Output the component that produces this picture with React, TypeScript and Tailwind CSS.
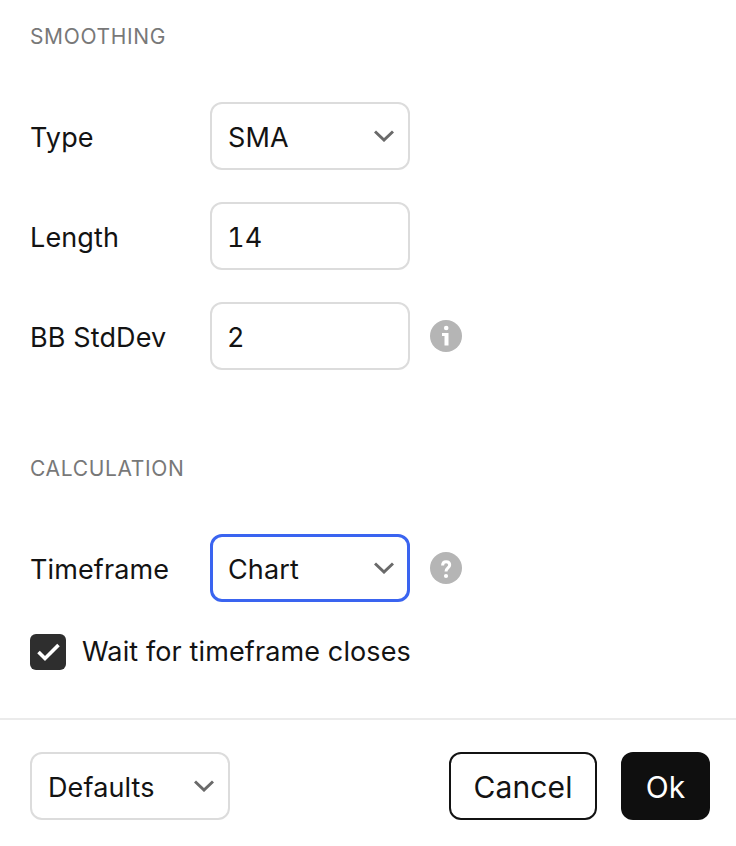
function Chevron() {
  return (
    <svg viewBox="0 0 20 12" className="w-5 h-3" fill="none" stroke="#6a6a6a" strokeWidth="3">
      <path d="M1 1.5 10 10l9-8.5" />
    </svg>
  );
}

function Select({ value, focused = false }: { value: string; focused?: boolean }) {
  return (
    <div
      className={`w-[200px] h-[68px] rounded-xl bg-white flex items-center justify-between ${
        focused ? "border-[3px] border-[#3a64f0] pl-[15px] pr-[13px]" : "border-2 border-[#dcdcdc] pl-4 pr-[14px]"
      }`}
    >
      <span className="pt-1">{value}</span>
      <Chevron />
    </div>
  );
}

function Field({ value }: { value: string }) {
  return (
    <div className="w-[200px] h-[68px] rounded-xl bg-white border-2 border-[#dcdcdc] flex items-center pl-[15px] pt-1 tabular-nums">
      {value}
    </div>
  );
}

function Row({ label, children }: { label: string; children: React.ReactNode }) {
  return (
    <div className="flex items-center h-[68px]">
      <div className="w-[180px] pt-1">{label}</div>
      {children}
    </div>
  );
}

function Hint({ mark }: { mark: "i" | "?" }) {
  return (
    <svg viewBox="0 0 32 32" className="w-8 h-8 ml-5">
      <circle cx="16" cy="16" r="16" fill="#b5b5b5" />
      {mark === "i" ? (
        <>
          <circle cx="16.2" cy="8" r="2.3" fill="#fff" />
          <path d="M12 13h6.5v12.5h-4V16H12z" fill="#fff" />
        </>
      ) : (
        <>
          <path
            d="M12.6 13.5c0-2.5 1.4-3.7 3.5-3.7s3.6 1.3 3.6 3.2c0 3-3.7 3-3.7 6.5"
            fill="none"
            stroke="#fff"
            strokeWidth="3"
          />
          <circle cx="16" cy="24" r="2.1" fill="#fff" />
        </>
      )}
    </svg>
  );
}

export default function App() {
  return (
    <div className="w-[736px] h-[846px] bg-white text-[#131313] text-[27px] tracking-[0.12px] leading-8 font-['Inter',sans-serif] overflow-hidden">
      <div className="px-[30px] pt-[25px]">
        <h2 className="text-[21px] leading-6 text-[#787878] tracking-[0.65px]">SMOOTHING</h2>
        <div className="mt-[53px] flex flex-col gap-8">
          <Row label="Type">
            <Select value="SMA" />
          </Row>
          <Row label="Length">
            <Field value="14" />
          </Row>
          <Row label="BB StdDev">
            <Field value="2" />
            <Hint mark="i" />
          </Row>
        </div>
        <h2 className="mt-[87px] text-[21px] leading-6 text-[#787878] tracking-[0.65px]">CALCULATION</h2>
        <div className="mt-[53px]">
          <Row label="Timeframe">
            <Select value="Chart" focused />
            <Hint mark="?" />
          </Row>
        </div>
        <div className="mt-8 flex items-center gap-4 h-9">
          <div className="w-9 h-9 rounded-md bg-[#2e2e2e] flex items-center justify-center">
            <svg viewBox="0 0 36 36" className="w-9 h-9" fill="none" stroke="#fff" strokeWidth="3.6">
              <path d="M8.5 18 15 24.5 28.5 11" />
            </svg>
          </div>
          <span>Wait for timeframe closes</span>
        </div>
      </div>
      <div className="mt-[48px] border-t-2 border-[#ebebeb] pr-[26px] pt-8 pl-[30px] flex items-center justify-between">
        <Select value="Defaults" />
        <div className="flex gap-6 text-[30px]">
          <button className="w-[148px] h-[68px] rounded-xl border-2 border-[#131313] bg-white pt-0.5">Cancel</button>
          <button className="w-[89px] h-[68px] rounded-xl bg-[#0f0f0f] text-white pt-0.5">Ok</button>
        </div>
      </div>
    </div>
  );
}
